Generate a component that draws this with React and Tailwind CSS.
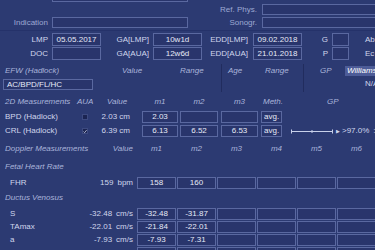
import React from 'react'

const box = 'border border-[#5a68a0] bg-[#29356c]'

function Field({ className = '', children }) {
  return (
    <div className={`${box} h-full flex items-center justify-center text-[#e6eaf7] whitespace-nowrap ${className}`}>
      {children}
    </div>
  )
}

function Check({ checked }) {
  return (
    <div className="w-[6px] h-[6px] bg-[#1b2452] border border-[#3d4a80] flex items-center justify-center">
      {checked && (
        <svg width="5" height="5" viewBox="0 0 5 5">
          <path d="M0.6 2.6 L2 4 L4.5 0.8" stroke="#dfe5f5" strokeWidth="0.9" fill="none" />
        </svg>
      )}
    </div>
  )
}

function DopplerRow({ label, value, unit, m1, m2, className = '' }) {
  const cols = [m1, m2, '', '', '', '']
  return (
    <div className={`flex items-center h-[12px] ${className}`}>
      <span className="w-[60px] pl-[10px] shrink-0">{label}</span>
      <span className="w-[73px] shrink-0 text-right whitespace-nowrap">
        {value}
        <span className="ml-[4px]">{unit}</span>
      </span>
      <div className="ml-[4px] flex h-full gap-[1px] shrink-0">
        {cols.map((v, i) => (
          <Field key={i} className="w-[39px] shrink-0">{v}</Field>
        ))}
      </div>
    </div>
  )
}

function RangeBar() {
  return (
    <svg width="42" height="7" viewBox="0 0 42 7">
      <path d="M0.5 1.5 V5.5 M0.5 3.5 H41.5 M41.5 1.5 V5.5 M21 2 V5" stroke="#c8d0ea" strokeWidth="1" fill="none" />
    </svg>
  )
}

export default function App() {
  return (
    <div className="w-[375px] h-[250px] overflow-hidden bg-[#2c3a72] text-[8px] leading-none text-[#d0d6ec] font-['Liberation_Sans',Arial,sans-serif]">
      {/* patient header */}
      <div className="flex h-[30px]">
        <div className="w-[190px] shrink-0 flex flex-col">
          <div className={`ml-[52px] w-[136px] h-[12px] -mt-[10px] shrink-0 ${box}`} />
          <div className="mt-[15px] flex items-center h-[11px]">
            <span className="w-[48px] text-right text-[#9ea9d2]">Indication</span>
            <div className={`ml-[4px] w-[136px] h-full ${box}`} />
          </div>
        </div>
        <div className="flex-1 flex flex-col">
          <div className="mt-[4px] flex items-center h-[11px]">
            <span className="w-[67px] text-right text-[#9ea9d2]">Ref. Phys.</span>
            <div className={`ml-[5px] flex-1 h-full ${box} border-r-0`} />
          </div>
          <div className="mt-[2px] flex items-center h-[11px]">
            <span className="w-[67px] text-right text-[#9ea9d2]">Sonogr.</span>
            <div className={`ml-[5px] flex-1 h-full ${box} border-r-0`} />
          </div>
        </div>
      </div>
      <div className="h-px bg-[#25326a]" />

      {/* dates */}
      <div className="mt-[2px] flex items-center h-[13px] whitespace-nowrap">
        <span className="w-[48px] text-right">LMP</span>
        <Field className="ml-[4px] w-[49px]">05.05.2017</Field>
        <span className="w-[52px] pr-[4px] text-right">GA[LMP]</span>
        <Field className="w-[49px]">10w1d</Field>
        <span className="w-[51px] pr-[5px] text-right">EDD[LMP]</span>
        <Field className="w-[49px]">09.02.2018</Field>
        <span className="w-[30px] pr-[4px] text-right">G</span>
        <Field className="w-[17px]" />
        <span className="ml-[16px]">Ab</span>
      </div>
      <div className="mt-[1px] flex items-center h-[13px] whitespace-nowrap">
        <span className="w-[48px] text-right">DOC</span>
        <Field className="ml-[4px] w-[49px]" />
        <span className="w-[52px] pr-[4px] text-right">GA[AUA]</span>
        <Field className="w-[49px]">12w6d</Field>
        <span className="w-[51px] pr-[5px] text-right">EDD[AUA]</span>
        <Field className="w-[49px]">21.01.2018</Field>
        <span className="w-[30px] pr-[4px] text-right">P</span>
        <Field className="w-[17px]" />
        <span className="ml-[16px]">Ec</span>
      </div>

      {/* EFW */}
      <div className="mt-[4px] flex h-[28px] italic text-[#aab4da] whitespace-nowrap">
        <div className="w-[221px] shrink-0 flex flex-col">
          <div className="flex items-center h-[13px]">
            <span className="w-[122px] pl-[5px]">EFW (Hadlock)</span>
            <span className="w-[58px]">Value</span>
            <span>Range</span>
          </div>
          <div className={`mt-[2px] ml-[3px] w-[90px] h-[11px] ${box} flex items-center pl-[3px] not-italic text-[#e6eaf7]`}>
            AC/BPD/FL/HC
          </div>
        </div>
        <div className="w-[82px] shrink-0 border-l border-[#212c5e]">
          <div className="flex items-center h-[13px] pl-[6px]">
            <span className="w-[37px]">Age</span>
            <span>Range</span>
          </div>
        </div>
        <div className="flex-1 border-l border-[#212c5e] flex flex-col">
          <div className="flex items-center h-[13px] pl-[16px]">
            <span className="w-[25px] shrink-0">GP</span>
            <span className="bg-[#4d5c98] text-white h-[10px] flex items-center px-[2px] flex-1">Williams</span>
          </div>
          <div className="mt-[2px] ml-[61px] not-italic text-[#d0d6ec] h-[10px] flex items-center">N/A</div>
        </div>
      </div>

      {/* 2D measurements */}
      <div className="mt-[4px] flex items-center h-[12px] italic text-[#aab4da] whitespace-nowrap">
        <span className="w-[77px] pl-[5px] shrink-0">2D Measurements</span>
        <span className="w-[30px] shrink-0">AUA</span>
        <span className="w-[35px] shrink-0">Value</span>
        <span className="w-[36px] text-center shrink-0">m1</span>
        <span className="ml-[2px] w-[38px] text-center shrink-0">m2</span>
        <span className="ml-[3px] w-[37px] text-center shrink-0">m3</span>
        <span className="ml-[5px] w-[64px] shrink-0">Meth.</span>
        <span>GP</span>
      </div>
      <div className="mt-[3px] flex items-center h-[12px] whitespace-nowrap">
        <span className="w-[80px] pl-[5px] shrink-0">BPD (Hadlock)</span>
        <div className="w-[12px] pl-[2px] shrink-0"><Check /></div>
        <span className="w-[38px] text-right shrink-0">2.03 cm</span>
        <Field className="ml-[12px] w-[36px] shrink-0">2.03</Field>
        <Field className="ml-[2px] w-[38px] shrink-0" />
        <Field className="ml-[3px] w-[37px] shrink-0" />
        <Field className="ml-[3px] w-[21px] shrink-0 justify-start pl-[2px]">avg.</Field>
      </div>
      <div className="mt-[2px] flex items-center h-[12px] whitespace-nowrap">
        <span className="w-[80px] pl-[5px] shrink-0">CRL (Hadlock)</span>
        <div className="w-[12px] pl-[2px] shrink-0"><Check checked /></div>
        <span className="w-[38px] text-right shrink-0">6.39 cm</span>
        <Field className="ml-[12px] w-[36px] shrink-0">6.13</Field>
        <Field className="ml-[2px] w-[38px] shrink-0">6.52</Field>
        <Field className="ml-[3px] w-[37px] shrink-0">6.53</Field>
        <Field className="ml-[3px] w-[21px] shrink-0 justify-start pl-[2px]">avg.</Field>
        <div className="ml-[9px] shrink-0 flex items-center"><RangeBar /></div>
        <span className="ml-[3px] text-[5px]">▶</span>
        <span className="ml-[2px]">&gt;97.0%</span>
        <span className="ml-[4px]">:</span>
      </div>

      {/* Doppler */}
      <div className="mt-[6px] flex items-center h-[12px] italic text-[#aab4da] whitespace-nowrap">
        <span className="w-[60px] pl-[5px] shrink-0">Doppler Measurements</span>
        <span className="w-[73px] text-right shrink-0">Value</span>
        <div className="ml-[4px] flex gap-[1px] shrink-0">
          {['m1', 'm2', 'm3', 'm4', 'm5', 'm6'].map((m) => (
            <span key={m} className="w-[39px] text-center">{m}</span>
          ))}
        </div>
      </div>
      <div className="mt-[6px] flex items-center h-[12px] pl-[5px] italic text-[#aab4da]">Fetal Heart Rate</div>
      <DopplerRow className="mt-[4px]" label="FHR" value="159" unit="bpm" m1="158" m2="160" />
      <div className="mt-[3px] flex items-center h-[12px] pl-[5px] italic text-[#aab4da]">Ductus Venosus</div>
      <DopplerRow className="mt-[4px]" label="S" value="-32.48" unit="cm/s" m1="-32.48" m2="-31.87" />
      <DopplerRow className="mt-[1px]" label="TAmax" value="-22.01" unit="cm/s" m1="-21.84" m2="-22.01" />
      <DopplerRow className="mt-[1px]" label="a" value="-7.93" unit="cm/s" m1="-7.93" m2="-7.31" />
      <DopplerRow className="mt-[1px]" label="" value="" unit="" m1="" m2="" />
    </div>
  )
}
